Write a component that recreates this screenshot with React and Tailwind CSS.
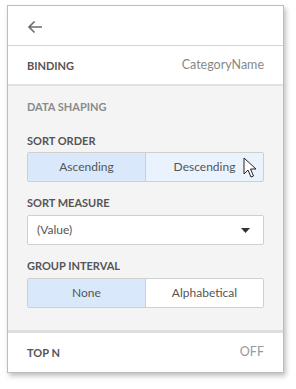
import { useState } from 'react';

const font = { fontFamily: 'Lato, "Noto Sans", sans-serif' };

function ArrowLeft() {
  return (
    <svg width="16" height="14" viewBox="0 0 16 14" fill="none">
      <path d="M15 7H2M7.5 1.5L2 7l5.5 5.5" stroke="#6b6b6b" strokeWidth="1.6" />
    </svg>
  );
}

function Cursor() {
  return (
    <svg width="14" height="21" viewBox="0 0 14 21" className="absolute left-[243px] top-[157px]">
      <path d="M1 1v16l4-4 3 7 2.5-1-3-7h5.5z" fill="#fff" stroke="#222" strokeWidth="1" strokeLinejoin="round" />
    </svg>
  );
}

function Segmented({ options, active, hover }) {
  return (
    <div className="flex h-[30px] border border-[#cfcfcf] rounded-[2px] overflow-hidden">
      {options.map((o, i) => (
        <div
          key={o}
          className={`flex-1 flex items-center justify-center text-[12px] text-[#555] ${
            i > 0 ? 'border-l border-[#cfcfcf]' : ''
          } ${o === active ? 'bg-[#dae8fb]' : o === hover ? 'bg-[#eaf2fd]' : 'bg-white'}`}
        >
          {o}
        </div>
      ))}
    </div>
  );
}

function Label({ children, className = '' }) {
  return (
    <div className={`text-[11px] font-bold text-[#555] leading-none ${className}`}>{children}</div>
  );
}

export default function App() {
  const [order] = useState('Ascending');

  return (
    <div className="relative w-[296px] h-[389px] bg-white pt-[5px] pl-[7px]" style={font}>
      <div className="w-[277px] h-[368px] border border-[#bdbdbd] bg-white shadow-[2px_3px_5px_rgba(0,0,0,0.25)] flex flex-col">
        {/* header */}
        <div className="h-[40px] flex items-center pl-[19px] pt-[3px] border-b border-[#d4d4d4]">
          <ArrowLeft />
        </div>

        {/* binding */}
        <div className="h-[40px] flex items-center justify-between px-[19px] border-b-2 border-[#e2e2e2]">
          <Label>BINDING</Label>
          <span className="text-[12.5px] text-[#888]">CategoryName</span>
        </div>

        {/* data shaping */}
        <div className="bg-[#f4f4f4] px-[19px] pt-[15px] h-[244px]">
          <div className="text-[11px] font-bold text-[#8a8a8a] leading-none">DATA SHAPING</div>

          <Label className="mt-[23px]">SORT ORDER</Label>
          <div className="mt-[6px]">
            <Segmented options={['Ascending', 'Descending']} active={order} hover="Descending" />
          </div>

          <Label className="mt-[15px]">SORT MEASURE</Label>
          <div className="mt-[7px] h-[30px] bg-white border border-[#cfcfcf] rounded-[2px] flex items-center justify-between pl-[9px] pr-[13px]">
            <span className="text-[12px] text-[#555]">(Value)</span>
            <svg width="9" height="5" viewBox="0 0 9 5">
              <path d="M0 0h9L4.5 5z" fill="#333" />
            </svg>
          </div>

          <Label className="mt-[15px]">GROUP INTERVAL</Label>
          <div className="mt-[7px]">
            <Segmented options={['None', 'Alphabetical']} active="None" />
          </div>
        </div>

        {/* top n */}
        <div className="border-t-[3px] border-[#dedede] flex-1 flex items-center justify-between px-[19px]">
          <Label>TOP N</Label>
          <span className="text-[12.5px] text-[#999]">OFF</span>
        </div>
      </div>
      <Cursor />
    </div>
  );
}
